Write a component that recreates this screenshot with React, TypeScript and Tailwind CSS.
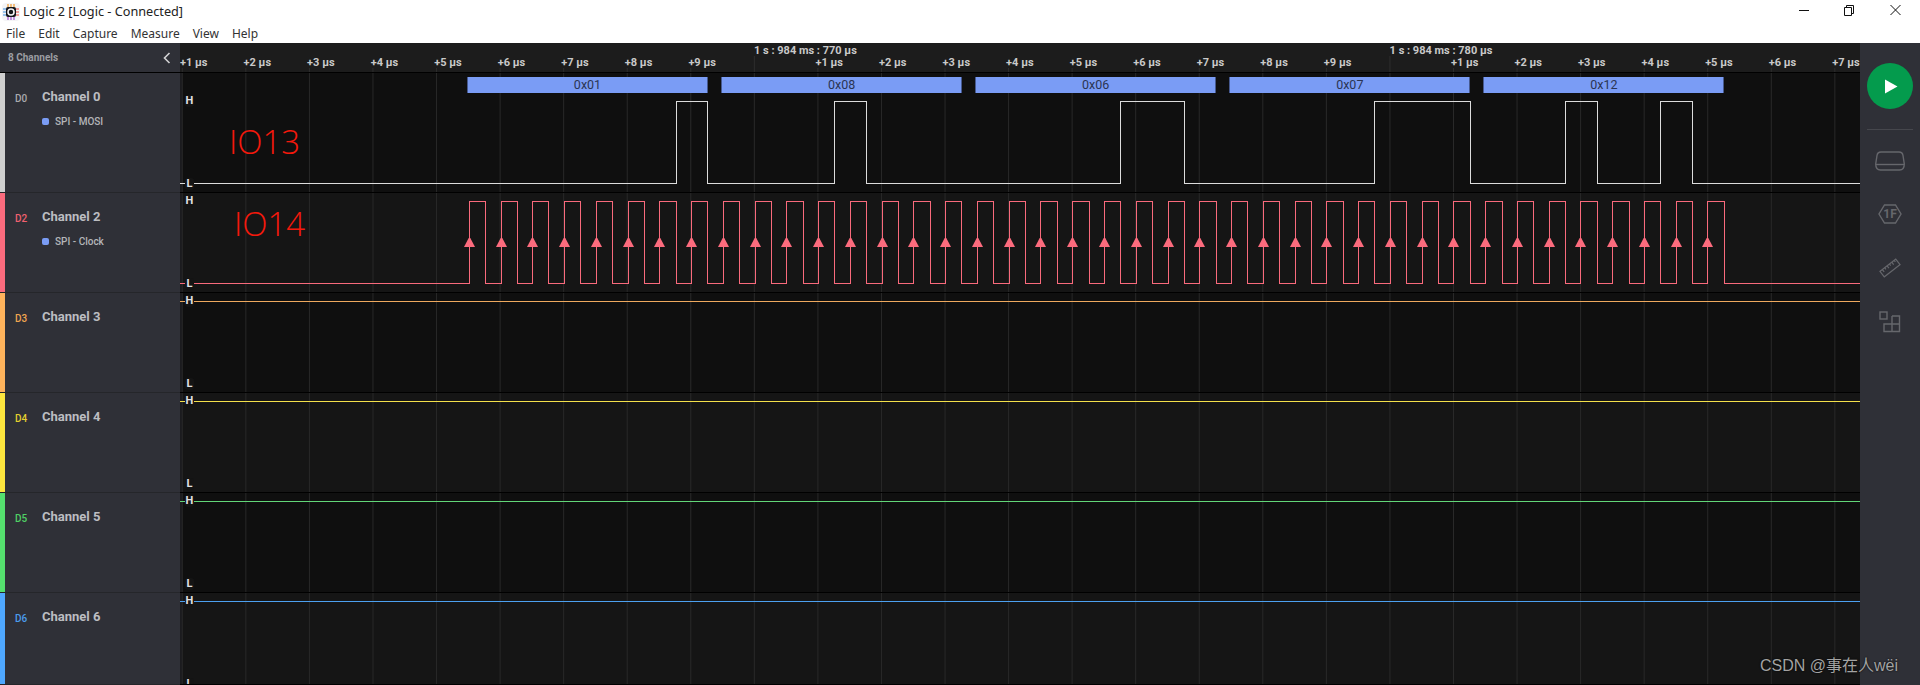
import React from "react";

const STEP = 63.56;
const GRID = Array.from({ length: 27 }, (_, i) => 2.3 + STEP * i);
const MENU = ["File", "Edit", "Capture", "Measure", "View", "Help"];
const BYTES = ["0x01", "0x08", "0x06", "0x07", "0x12"];

const rise = (n: number) => Math.round(468.8 + 31.76 * n) - 180;
const fall = (n: number) => Math.round(484.9 + 31.77 * n) - 180;

// mosi high pulses, as clock falling edge indexes
const MOSI_PULSES = [
  [6, 7],
  [11, 12],
  [20, 22],
  [28, 31],
  [34, 35],
  [37, 38],
];

function mosiPath(high: number, low: number) {
  let d = `M0 ${low}`;
  for (const [a, b] of MOSI_PULSES) {
    const x1 = fall(a) + 0.5;
    const x2 = fall(b) + 0.5;
    d += ` H${x1} V${high} H${x2} V${low}`;
  }
  return d + ` H1680`;
}

function clockPath(high: number, low: number) {
  let d = `M0 ${low}`;
  for (let n = 0; n < 40; n++) {
    d += ` H${rise(n) + 0.5} V${high} H${fall(n) + 0.5} V${low}`;
  }
  return d + ` H1680`;
}

function Grid() {
  return (
    <>
      <rect x="0" y="0" width="2" height="120" fill="#1b1b1e" />
      {GRID.map((x) => (
        <line key={x} x1={x} x2={x} y1="0" y2="120" stroke="#292929" strokeWidth="1" />
      ))}
    </>
  );
}

function Level({ letter, top }: { letter: string; top: number }) {
  return (
    <span
      className="absolute left-[5px] w-[9px] h-[12px] rounded-[3px] bg-[#141414] text-center text-[11px] leading-[12px] font-bold text-[#e2e2e2]"
      style={{ top }}
    >
      {letter}
    </span>
  );
}

interface RowProps {
  id: string;
  name: string;
  color: string;
  tag: string;
  sub?: string;
  dark: boolean;
  grow?: boolean;
  tall?: boolean;
  children?: React.ReactNode;
  highY?: number;
  lowY?: number;
}

function Row({ id, name, color, tag, sub, dark, tall, grow, children, highY = 8.5, lowY = 90.5 }: RowProps) {
  const height = grow ? "flex-1 min-h-0" : tall ? "h-[120px] shrink-0" : "h-[100px] shrink-0";
  return (
    <div className={`flex ${height}`}>
      <div className="w-[180px] shrink-0 flex bg-[#2f3037] border-b border-[#25262a]">
        <div className="w-[5px] shrink-0" style={{ backgroundColor: color }} />
        <div className="flex-1 relative">
          <div className="flex items-center h-[18px] mt-[15px]">
            <span className="w-[37px] pl-[10px] mt-[3px] text-[10px] font-medium" style={{ color: tag }}>
              {id}
            </span>
            <span className="text-[13px] font-bold text-[#bcbdc1]">{name}</span>
          </div>
          {sub && (
            <div className="flex items-center gap-[6px] ml-[37px] mt-[9px] h-[12px]">
              <span className="w-[7px] h-[7px] rounded-[2px] bg-[#7a9cf5]" />
              <span className="text-[10px] font-medium text-[#b4b5b9]">{sub}</span>
            </div>
          )}
        </div>
      </div>
      <div className={`relative flex-1 overflow-hidden border-b border-black ${dark ? "bg-[#0f0f0f]" : "bg-[#151515]"}`}>
        <svg className="block absolute inset-0" width="1680" height="120" fill="none">
          <Grid />
          {children}
        </svg>
        <Level letter="H" top={Math.floor(highY) - 6} />
        <Level letter="L" top={Math.floor(lowY) - 5} />
        {tall && (
          <div className="absolute top-[4px] left-[287px] flex gap-[13.1px]">
            {BYTES.map((b) => (
              <div
                key={b}
                className="w-[241px] h-[16px] flex items-center justify-center bg-[#7a9cf5] border-x border-[#46598f] text-[12.5px] leading-none text-[#2b3553]"
              >
                {b}
              </div>
            ))}
          </div>
        )}
        {tall && (
          <span className="absolute left-[49px] top-[49px] text-[33px] leading-[40px] font-[350] text-[#f5190c] font-['Open_Sans',sans-serif]">
            IO13
          </span>
        )}
        {sub === "SPI - Clock" && (
          <span className="absolute left-[54px] top-[11px] text-[33px] leading-[40px] font-[350] text-[#f5190c] font-['Open_Sans',sans-serif]">
            IO14
          </span>
        )}
      </div>
    </div>
  );
}

function Flat({ stroke }: { stroke: string }) {
  return <line x1="0" x2="1680" y1="8.5" y2="8.5" stroke={stroke} strokeWidth="1" />;
}

function Logo() {
  return (
    <svg width="18" height="18" viewBox="0 0 18 18" className="ml-[2px]">
      <rect x="0" y="0" width="18" height="18" rx="4" fill="#f4f4f6" />
      <path d="M6 1v3M9 1v3M12 1v3" stroke="#f29b2e" strokeWidth="1.2" />
      <path d="M1 6h3M1 9h3M1 12h3" stroke="#3d8fe0" strokeWidth="1.2" />
      <path d="M14 6h3M14 9h3M14 12h3" stroke="#e8483f" strokeWidth="1.2" />
      <path d="M6 14v3M9 14v3M12 14v3" stroke="#a04fd0" strokeWidth="1.2" />
      <rect x="4" y="4" width="10" height="10" rx="2" fill="#15151a" />
      <circle cx="9" cy="9" r="3" fill="none" stroke="#f4f4f6" strokeWidth="1.6" />
    </svg>
  );
}

function WindowButtons() {
  return (
    <div className="flex items-center">
      <svg width="46" height="24" fill="none" stroke="#111" strokeWidth="1">
        <path d="M1 10.5h10" />
      </svg>
      <svg width="46" height="24" fill="none" stroke="#111" strokeWidth="1">
        <path d="M0.5 7.5h7v8h-7zM2.5 7.5v-2h7v8h-2" />
      </svg>
      <svg width="30" height="24" fill="none" stroke="#111" strokeWidth="1">
        <path d="M0.5 5l10 10M10.5 5L0.5 15" />
      </svg>
    </div>
  );
}

function RightPanel() {
  return (
    <div className="w-[60px] shrink-0 bg-[#2f3037] flex flex-col items-center pt-[20px]">
      <div className="w-[46px] h-[46px] rounded-full bg-[#049b4d] flex items-center justify-center">
        <svg width="14" height="15" viewBox="0 0 14 15" className="ml-[2px]">
          <path d="M1 0.5L13.5 7.5L1 14.5Z" fill="#fff" />
        </svg>
      </div>
      <div className="w-[46px] h-px bg-[#46474d] mt-[20px]" />
      <svg width="30" height="20" viewBox="0 0 30 20" fill="none" stroke="#66676c" strokeWidth="1.4" className="mt-[21px]">
        <path d="M6 1H24Q27.5 1 28 4.5L29.3 13Q29.3 19 24.5 19H5.5Q0.7 19 0.7 13L2 4.5Q2.5 1 6 1Z" />
        <path d="M1 13.5H29" />
      </svg>
      <svg width="24" height="20" viewBox="0 0 24 20" fill="none" stroke="#66676c" strokeWidth="1.4" className="mt-[33px]">
        <path d="M6.5 1H17.5L23 10L17.5 19H6.5L1 10Z" />
        <text x="12" y="14.2" textAnchor="middle" fontSize="12" fontWeight="700" fontFamily="Roboto, sans-serif" fill="#66676c" stroke="none">
          1F
        </text>
      </svg>
      <svg width="22" height="22" viewBox="0 0 22 22" fill="none" stroke="#66676c" strokeWidth="1.2" className="mt-[33px]">
        <g transform="rotate(-38 11 11)">
          <rect x="1" y="7.5" width="20" height="7" />
          <path d="M4 7.5v3M7 7.5v2M10 7.5v3M13 7.5v2M16 7.5v3M19 7.5v2" />
        </g>
      </svg>
      <svg width="22" height="22" viewBox="0 0 22 22" fill="none" stroke="#66676c" strokeWidth="1.4" className="mt-[32px]">
        <rect x="1" y="1" width="7" height="7" />
        <path d="M13 5H20.5V20.5H5V13H20.5M13 5V20.5" />
      </svg>
    </div>
  );
}

function Timeline() {
  const tickLabels: string[] = [];
  for (let i = 0; i < 27; i++) {
    const n = (i % 10) + 1;
    tickLabels.push(i % 10 === 9 ? "" : `+${n} µs`);
  }
  return (
    <div className="relative flex-1 bg-[#1c1c1c] overflow-hidden">
      <svg className="absolute inset-0" width="1680" height="29" fill="none">
        {GRID.map((x, i) => (
          <line key={x} x1={x} x2={x} y1={i % 10 === 9 ? 13 : 25} y2="29" stroke="#2e2e2e" />
        ))}
      </svg>
      <div className="relative flex pl-[574px] h-[14px] pt-[2px] text-[11px] leading-[12px] font-bold text-[#c9c9c9]">
        <span className="w-[635.6px] shrink-0">1 s : 984 ms : 770 µs</span>
        <span>1 s : 984 ms : 780 µs</span>
      </div>
      <div className="relative flex h-[14px] text-[11px] leading-[11px] font-bold text-[#c9c9c9]">
        {tickLabels.map((t, i) => (
          <span key={i} className="w-[63.56px] shrink-0 whitespace-nowrap">
            {t}
          </span>
        ))}
      </div>
    </div>
  );
}

export default function App() {
  return (
    <div className="relative w-[1920px] h-[685px] overflow-hidden flex flex-col bg-white font-['Roboto',sans-serif]">
      <div className="h-[24px] shrink-0 flex items-center justify-between font-['Noto_Sans',sans-serif]">
        <div className="flex items-center">
          <Logo />
          <span className="ml-[3px] text-[12.7px] text-[#222]">Logic 2 [Logic - Connected]</span>
        </div>
        <WindowButtons />
      </div>
      <div className="h-[19px] shrink-0 flex items-center gap-[13px] pl-[6px] text-[12px] text-[#333] font-['Noto_Sans',sans-serif]">
        {MENU.map((m) => (
          <span key={m}>{m}</span>
        ))}
      </div>
      <div className="flex-1 min-h-0 flex">
        <div className="flex-1 min-w-0 flex flex-col">
          <div className="h-[30px] shrink-0 flex border-b border-black">
            <div className="w-[180px] shrink-0 bg-[#2f3037] flex items-center justify-between pl-[8px] pr-[9px]">
              <span className="text-[10px] font-bold text-[#9c9da2]">8 Channels</span>
              <svg width="8" height="12" viewBox="0 0 8 12" fill="none" stroke="#d2d2d4" strokeWidth="1.6">
                <path d="M6.5 1L1.5 6L6.5 11" />
              </svg>
            </div>
            <Timeline />
          </div>
          <Row id="D0" name="Channel 0" color="#cfcfcf" tag="#a9aaae" sub="SPI - MOSI" dark tall highY={28.5} lowY={110.5}>
            <path d={mosiPath(28.5, 110.5)} stroke="#dcdcdc" strokeWidth="1" shapeRendering="crispEdges" />
          </Row>
          <Row id="D2" name="Channel 2" color="#fb6b7d" tag="#f0606f" sub="SPI - Clock" dark={false}>
            <path d={clockPath(8.5, 90.5)} stroke="#f96a7c" strokeWidth="1" shapeRendering="crispEdges" />
            {Array.from({ length: 40 }, (_, n) => {
              const x = rise(n) + 0.5;
              return <path key={n} d={`M${x - 0.8} 45 H${x + 0.8} L${x + 5.5} 54 H${x - 5.5} Z`} fill="#fb6b7d" />;
            })}
          </Row>
          <Row id="D3" name="Channel 3" color="#ffb35c" tag="#f0a550" dark>
            <Flat stroke="#eea95e" />
          </Row>
          <Row id="D4" name="Channel 4" color="#fde63e" tag="#e5d02f" dark={false}>
            <Flat stroke="#f3e04a" />
          </Row>
          <Row id="D5" name="Channel 5" color="#55e06e" tag="#4fd065" dark>
            <Flat stroke="#62d678" />
          </Row>
          <Row id="D6" name="Channel 6" color="#4fa8ff" tag="#4b9ced" dark={false} grow>
            <Flat stroke="#4ca0f0" />
          </Row>
        </div>
        <RightPanel />
      </div>
      <span className="absolute left-[1760px] top-[655px] text-[16px] leading-[22px] text-[#a3a3a3] [text-shadow:0_0_2px_#000] font-['Liberation_Sans','Noto_Sans_CJK_SC',sans-serif]">
        CSDN @事在人wëi
      </span>
    </div>
  );
}
